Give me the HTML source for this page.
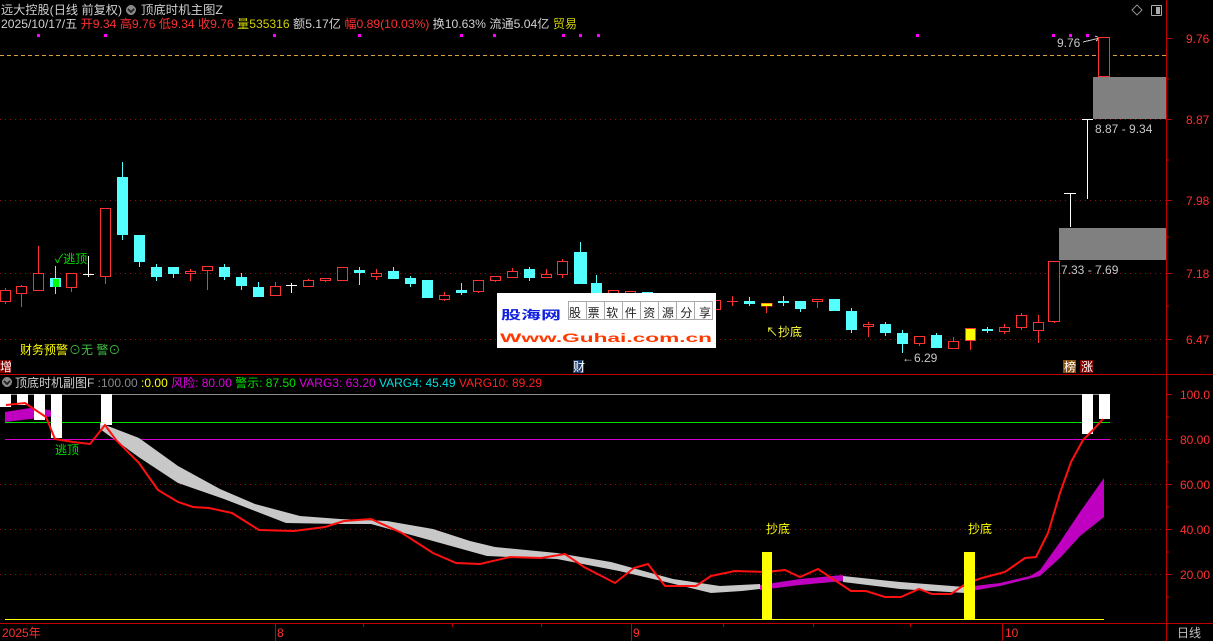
<!DOCTYPE html>
<html><head><meta charset="utf-8">
<style>
html,body{margin:0;padding:0;background:#000;width:1213px;height:641px;overflow:hidden}
svg{display:block}
text{font-family:"Liberation Sans","Noto Sans CJK SC",sans-serif;font-size:12px}
</style></head><body>
<svg width="1213" height="641" viewBox="0 0 1213 641" xmlns="http://www.w3.org/2000/svg" shape-rendering="crispEdges">
<rect width="1213" height="641" fill="#000"/>
<g stroke="#8a1010" stroke-dasharray="1,4" stroke-width="1">
<line x1="0" y1="119.5" x2="1166" y2="119.5"/>
<line x1="0" y1="200.5" x2="1166" y2="200.5"/>
<line x1="0" y1="273.5" x2="1166" y2="273.5"/>
<line x1="0" y1="339.5" x2="1166" y2="339.5"/>
<line x1="0" y1="484.5" x2="1166" y2="484.5"/>
<line x1="0" y1="529.5" x2="1166" y2="529.5"/>
<line x1="0" y1="574.5" x2="1166" y2="574.5"/>
<line x1="1110" y1="439.5" x2="1166" y2="439.5"/>
</g>
<line x1="0" y1="55.5" x2="1166" y2="55.5" stroke="#e0a040" stroke-dasharray="4,3"/>
<g stroke="#c00000" stroke-width="1">
<line x1="1166.5" y1="0" x2="1166.5" y2="641"/>
<line x1="0" y1="374.5" x2="1213" y2="374.5"/>
<line x1="0" y1="623.5" x2="1213" y2="623.5"/>
<line x1="1166" y1="38.5" x2="1172" y2="38.5"/><line x1="1166" y1="119.5" x2="1172" y2="119.5"/>
<line x1="1166" y1="200.5" x2="1172" y2="200.5"/><line x1="1166" y1="273.5" x2="1172" y2="273.5"/>
<line x1="1166" y1="339.5" x2="1172" y2="339.5"/>
<line x1="1166" y1="394.5" x2="1172" y2="394.5"/><line x1="1166" y1="439.5" x2="1172" y2="439.5"/>
<line x1="1166" y1="484.5" x2="1172" y2="484.5"/><line x1="1166" y1="529.5" x2="1172" y2="529.5"/>
<line x1="1166" y1="574.5" x2="1172" y2="574.5"/>
<line x1="1166" y1="417" x2="1169" y2="417"/><line x1="1166" y1="462" x2="1169" y2="462"/>
<line x1="1166" y1="507" x2="1169" y2="507"/><line x1="1166" y1="552" x2="1169" y2="552"/><line x1="1166" y1="597" x2="1169" y2="597"/>
<line x1="1166" y1="79" x2="1169" y2="79"/><line x1="1166" y1="160" x2="1169" y2="160"/><line x1="1166" y1="237" x2="1169" y2="237"/><line x1="1166" y1="306" x2="1169" y2="306"/>
<line x1="275.5" y1="623" x2="275.5" y2="641"/><line x1="631.5" y1="623" x2="631.5" y2="641"/><line x1="1002.5" y1="623" x2="1002.5" y2="641"/>
<line x1="363.5" y1="623" x2="363.5" y2="627"/><line x1="452.5" y1="623" x2="452.5" y2="627"/><line x1="541.5" y1="623" x2="541.5" y2="627"/>
<line x1="723.5" y1="623" x2="723.5" y2="627"/><line x1="813.5" y1="623" x2="813.5" y2="627"/><line x1="910.5" y1="623" x2="910.5" y2="627"/>
</g>
<g fill="#ff3030" font-size="12">
<text x="1186" y="43">9.76</text><text x="1186" y="124">8.87</text><text x="1186" y="205">7.98</text>
<text x="1186" y="278">7.18</text><text x="1186" y="344">6.47</text>
<text x="1180" y="399">100.0</text><text x="1180" y="444">80.00</text><text x="1180" y="489">60.00</text>
<text x="1180" y="534">40.00</text><text x="1180" y="579">20.00</text>
<text x="2" y="637">2025年</text><text x="277" y="637">8</text><text x="633" y="637">9</text><text x="1005" y="637">10</text>
</g>
<text x="1177" y="637" fill="#c0c0c0">日线</text>
<text x="1" y="14" fill="#d0d0d0" textLength="121" lengthAdjust="spacingAndGlyphs">远大控股(日线 前复权)</text>
<circle cx="131" cy="10" r="5" fill="#888"/><path d="M128 9 L131 12 L134 9" stroke="#222" fill="none" stroke-width="1.5"/>
<text x="141" y="14" fill="#d0d0d0" textLength="82" lengthAdjust="spacingAndGlyphs">顶底时机主图Z</text>
<text x="1" y="28" font-size="12" textLength="576" lengthAdjust="spacingAndGlyphs"><tspan fill="#d0d0d0">2025/10/17/五 </tspan><tspan fill="#ff3030">开9.34 高9.76 低9.34 收9.76 </tspan><tspan fill="#d0d000">量535316 </tspan><tspan fill="#d0d0d0">额5.17亿 </tspan><tspan fill="#ff3030">幅0.89(10.03%) </tspan><tspan fill="#d0d0d0">换10.63% 流通5.04亿 </tspan><tspan fill="#d0d000">贸易</tspan></text>
<g fill="#ff00ff">
<rect x="37" y="34" width="3" height="3"/><rect x="104" y="34" width="3" height="3"/><rect x="273" y="34" width="3" height="3"/>
<rect x="358" y="34" width="3" height="3"/><rect x="460" y="34" width="3" height="3"/><rect x="493" y="34" width="3" height="3"/>
<rect x="562" y="34" width="3" height="3"/><rect x="579" y="34" width="3" height="3"/><rect x="597" y="34" width="3" height="3"/>
<rect x="916" y="34" width="3" height="3"/><rect x="1052" y="34" width="3" height="3"/><rect x="1069" y="34" width="3" height="3"/><rect x="1086" y="34" width="3" height="3"/>
</g>
<path d="M1137 5 L1142 10 L1137 15 L1132 10 Z" stroke="#888" fill="none"/>
<rect x="1151.5" y="5.5" width="10" height="10" rx="1" stroke="#aaa" fill="none"/><rect x="1156" y="7" width="4" height="7" fill="#aaa"/>
<rect x="1093" y="77" width="73" height="42" fill="#808080"/>
<rect x="1059" y="228" width="107" height="32" fill="#808080"/>
<text x="1095" y="133" fill="#c8c8c8">8.87 - 9.34</text>
<text x="1061" y="274" fill="#c8c8c8">7.33 - 7.69</text>
<text x="1057" y="47" fill="#c8c8c8">9.76</text>
<path d="M1083 42 L1100 38 M1095 36 L1100 38 L1096 41" stroke="#c8c8c8" fill="none"/>
<g stroke-width="1">
<g stroke="#ff3232" fill="#000">
<line x1="5.5" y1="288" x2="5.5" y2="304"/><rect x="0.5" y="290.5" width="10" height="11"/>
<line x1="21.5" y1="285" x2="21.5" y2="307"/><rect x="16.5" y="286.5" width="10" height="7"/>
<line x1="38.5" y1="246" x2="38.5" y2="290"/><rect x="33.5" y="273.5" width="10" height="17"/>
<line x1="71.5" y1="273" x2="71.5" y2="292"/><rect x="66.5" y="273.5" width="10" height="14"/>
<line x1="105.5" y1="208" x2="105.5" y2="284"/><rect x="100.5" y="208.5" width="10" height="68"/>
<line x1="190.5" y1="269" x2="190.5" y2="281"/><rect x="185.5" y="271.5" width="10" height="2"/>
<line x1="207.5" y1="266" x2="207.5" y2="290"/><rect x="202.5" y="266.5" width="10" height="4"/>
<line x1="275.5" y1="282" x2="275.5" y2="295"/><rect x="270.5" y="286.5" width="10" height="9"/>
<line x1="308.5" y1="279" x2="308.5" y2="286"/><rect x="303.5" y="280.5" width="10" height="6"/>
<line x1="325.5" y1="278" x2="325.5" y2="282"/><rect x="320.5" y="278.5" width="10" height="2"/>
<rect x="337.5" y="267.5" width="10" height="13"/>
<line x1="376.5" y1="269" x2="376.5" y2="280"/><rect x="371.5" y="273.5" width="10" height="3"/>
<line x1="444.5" y1="292" x2="444.5" y2="301"/><rect x="439.5" y="295.5" width="10" height="4"/>
<line x1="478.5" y1="280" x2="478.5" y2="293"/><rect x="473.5" y="280.5" width="10" height="11"/>
<line x1="495.5" y1="276" x2="495.5" y2="282"/><rect x="490.5" y="276.5" width="10" height="4"/>
<line x1="512.5" y1="268" x2="512.5" y2="278"/><rect x="507.5" y="271.5" width="10" height="6"/>
<line x1="546.5" y1="269" x2="546.5" y2="278"/><rect x="541.5" y="274.5" width="10" height="3"/>
<line x1="562.5" y1="259" x2="562.5" y2="278"/><rect x="557.5" y="261.5" width="10" height="13"/>
<rect x="608.5" y="290.5" width="10" height="10"/><rect x="625.5" y="291.5" width="10" height="9"/>
<rect x="676.5" y="293.5" width="10" height="7"/><rect x="693.5" y="296.5" width="10" height="9"/>
<rect x="710.5" y="300.5" width="10" height="9"/>
<line x1="732.5" y1="296" x2="732.5" y2="306"/><line x1="727" y1="301.5" x2="738" y2="301.5"/>
<line x1="817.5" y1="299" x2="817.5" y2="308"/><rect x="812.5" y="299.5" width="10" height="2"/>
<line x1="868.5" y1="322" x2="868.5" y2="337"/><rect x="863.5" y="324.5" width="10" height="2"/>
<line x1="919.5" y1="336" x2="919.5" y2="346"/><rect x="914.5" y="336.5" width="10" height="7"/>
<line x1="953.5" y1="337" x2="953.5" y2="348"/><rect x="948.5" y="341.5" width="10" height="7"/>
<line x1="1004.5" y1="324" x2="1004.5" y2="334"/><rect x="999.5" y="327.5" width="10" height="4"/>
<line x1="1021.5" y1="313" x2="1021.5" y2="330"/><rect x="1016.5" y="315.5" width="10" height="12"/>
<line x1="1038.5" y1="315" x2="1038.5" y2="343"/><rect x="1033.5" y="322.5" width="10" height="8"/>
<line x1="1054.5" y1="261" x2="1054.5" y2="323"/><rect x="1048.5" y="261.5" width="11" height="60"/>
<rect x="1098.5" y="37.5" width="11" height="39"/>
</g>
<g fill="#54ffff" stroke="#54ffff">
<line x1="55.5" y1="266" x2="55.5" y2="294"/><rect x="50.5" y="278.5" width="10" height="8"/>
<line x1="122.5" y1="162" x2="122.5" y2="240"/><rect x="117.5" y="177.5" width="10" height="57"/>
<line x1="139.5" y1="235" x2="139.5" y2="267"/><rect x="134.5" y="235.5" width="10" height="26"/>
<line x1="156.5" y1="264" x2="156.5" y2="281"/><rect x="151.5" y="267.5" width="10" height="9"/>
<line x1="173.5" y1="267" x2="173.5" y2="278"/><rect x="168.5" y="267.5" width="10" height="6"/>
<line x1="224.5" y1="264" x2="224.5" y2="280"/><rect x="219.5" y="267.5" width="10" height="9"/>
<line x1="241.5" y1="273" x2="241.5" y2="290"/><rect x="236.5" y="277.5" width="10" height="8"/>
<line x1="258.5" y1="282" x2="258.5" y2="297"/><rect x="253.5" y="287.5" width="10" height="9"/>
<line x1="359.5" y1="267" x2="359.5" y2="285"/><rect x="354.5" y="270.5" width="10" height="2"/>
<line x1="393.5" y1="267" x2="393.5" y2="278"/><rect x="388.5" y="271.5" width="10" height="7"/>
<line x1="410.5" y1="276" x2="410.5" y2="287"/><rect x="405.5" y="278.5" width="10" height="5"/>
<rect x="422.5" y="280.5" width="10" height="17"/>
<line x1="461.5" y1="283" x2="461.5" y2="295"/><rect x="456.5" y="290.5" width="10" height="2"/>
<line x1="529.5" y1="267" x2="529.5" y2="281"/><rect x="524.5" y="269.5" width="10" height="8"/>
<line x1="580.5" y1="242" x2="580.5" y2="284"/><rect x="574.5" y="252.5" width="12" height="31"/>
<line x1="596.5" y1="275" x2="596.5" y2="292"/><rect x="591.5" y="283.5" width="10" height="9"/>
<rect x="642.5" y="292.5" width="10" height="9"/><rect x="659.5" y="293.5" width="10" height="7"/>
<line x1="749.5" y1="297" x2="749.5" y2="306"/><rect x="744.5" y="301.5" width="10" height="2"/>
<line x1="783.5" y1="296" x2="783.5" y2="306"/><rect x="778.5" y="301.5" width="10" height="1"/>
<line x1="800.5" y1="301" x2="800.5" y2="312"/><rect x="795.5" y="301.5" width="10" height="7"/>
<rect x="829.5" y="299.5" width="10" height="11"/>
<line x1="851.5" y1="308" x2="851.5" y2="333"/><rect x="846.5" y="311.5" width="10" height="18"/>
<line x1="885.5" y1="322" x2="885.5" y2="336"/><rect x="880.5" y="324.5" width="10" height="8"/>
<line x1="902.5" y1="330" x2="902.5" y2="353"/><rect x="897.5" y="333.5" width="10" height="10"/>
<line x1="936.5" y1="333" x2="936.5" y2="347"/><rect x="931.5" y="335.5" width="10" height="12"/>
<line x1="987.5" y1="327" x2="987.5" y2="333"/><rect x="982.5" y="329.5" width="10" height="1"/>
</g>
<rect x="53" y="279" width="6" height="8" fill="#00ff00"/>
<g stroke="#fff">
<line x1="88.5" y1="256" x2="88.5" y2="277"/><line x1="83" y1="274.5" x2="94" y2="274.5"/>
<line x1="291.5" y1="283" x2="291.5" y2="293"/><line x1="286" y1="285.5" x2="297" y2="285.5"/>
<line x1="1070.5" y1="193" x2="1070.5" y2="227"/><line x1="1064" y1="193.5" x2="1076" y2="193.5"/>
<line x1="1087.5" y1="119" x2="1087.5" y2="199"/><line x1="1082" y1="119.5" x2="1093" y2="119.5"/>
</g>
<line x1="766.5" y1="304" x2="766.5" y2="313" stroke="#ff3232"/><rect x="761" y="303" width="11" height="3" fill="#ffff00" stroke="#ff3232" stroke-width="0.5"/>
<rect x="965.5" y="328.5" width="10" height="12" fill="#ffff00" stroke="#ff3232"/><line x1="970.5" y1="341" x2="970.5" y2="350" stroke="#ff3232"/>
</g>
<text x="55" y="263" fill="#00e000">✓逃顶</text>
<text x="766" y="336" fill="#ffff40">↖抄底</text>
<text x="902" y="362" fill="#c8c8c8">←6.29</text>
<text x="20" y="354" fill="#ffff00">财务预警</text><text x="69" y="354" fill="#40c040">⊙无 警⊙</text>
<rect x="0" y="360" width="11" height="13" fill="#800000"/><text x="0" y="371" fill="#fff" font-size="11">增</text>
<rect x="573" y="360" width="11" height="13" fill="#1a3a6a"/><text x="573" y="371" fill="#fff" font-size="11">财</text>
<rect x="1063" y="360" width="13" height="13" fill="#8a5010"/><text x="1064" y="371" fill="#fff" font-size="11">榜</text>
<rect x="1080" y="360" width="13" height="13" fill="#800000"/><text x="1081" y="371" fill="#fff" font-size="11">涨</text>
<rect x="497" y="293" width="219" height="55" fill="#fff"/>
<text x="501" y="319" fill="#1020e0" font-size="24" font-weight="bold" font-family="'Noto Sans CJK SC',sans-serif" textLength="60" lengthAdjust="spacingAndGlyphs">股海网</text>
<g stroke="#aaa" fill="none"><rect x="568.5" y="301.5" width="144" height="18"/>
<line x1="586.5" y1="301" x2="586.5" y2="320"/><line x1="604.5" y1="301" x2="604.5" y2="320"/><line x1="622.5" y1="301" x2="622.5" y2="320"/><line x1="640.5" y1="301" x2="640.5" y2="320"/><line x1="658.5" y1="301" x2="658.5" y2="320"/><line x1="676.5" y1="301" x2="676.5" y2="320"/><line x1="694.5" y1="301" x2="694.5" y2="320"/></g>
<text x="569" y="317" fill="#222" font-size="16" font-family="'Noto Serif CJK SC',serif" textLength="142" lengthAdjust="spacing">股票软件资源分享</text>
<text x="500" y="342" fill="#ff3a00" font-size="21" font-weight="bold" textLength="212" lengthAdjust="spacingAndGlyphs">Www.Guhai.com.cn</text>
<circle cx="7" cy="382" r="5" fill="#888"/><path d="M4 381 L7 384 L10 381" stroke="#222" fill="none" stroke-width="1.5"/>
<text x="15" y="387"><tspan fill="#d0d0d0">顶底时机副图F </tspan><tspan fill="#888">:100.00 </tspan><tspan fill="#ffff00">:0.00 </tspan><tspan fill="#e000e0">风险: 80.00 </tspan><tspan fill="#00e000">警示: 87.50 </tspan><tspan fill="#e000e0">VARG3: 63.20 </tspan><tspan fill="#00e0e0">VARG4: 45.49 </tspan><tspan fill="#ff2020">VARG10: 89.29</tspan></text>
<line x1="0" y1="394.5" x2="1110" y2="394.5" stroke="#909090"/>
<line x1="5" y1="422.5" x2="1110" y2="422.5" stroke="#00e000"/>
<line x1="5" y1="439.5" x2="1110" y2="439.5" stroke="#d000d0"/>
<line x1="5" y1="619.5" x2="1104" y2="619.5" stroke="#ffff00"/>
<g shape-rendering="auto">
<polygon fill="#c8c8c8" points="100,423 139,438 178,466 220,489 255,504 300,516 340,519 387,521 433,529 470,541 495,547 557,553 611,562 673,579 720,586 760,584 760,589 742,591 711,593 670,583 619,571 557,559 487,556 433,541 371,524 340,524 286,523 224,499 178,483 140,458 100,429"/>
<polygon fill="#c8c8c8" points="843,576 900,582 965,587 965,593 900,589 843,582"/>
<polygon fill="#c000c0" points="760,585 800,579 843,575 843,581 800,585 760,590"/>
<polygon fill="#c000c0" points="5,412 30,408 50,410 55,416 30,419 5,422"/>
<polygon fill="#c000c0" points="965,587 1000,583 1030,576 1040,570 1060,542 1080,512 1104,478 1104,517 1080,536 1060,558 1040,576 1000,586 965,592"/>
<g fill="#fff">
<rect x="0" y="394" width="11" height="13"/><rect x="17" y="394" width="11" height="11"/><rect x="34" y="394" width="11" height="26"/>
<rect x="51" y="394" width="11" height="44"/><rect x="101" y="394" width="11" height="31"/>
<rect x="1082" y="394" width="11" height="40"/><rect x="1099" y="394" width="11" height="25"/>
</g>
<polyline fill="none" stroke="#ff1010" stroke-width="2" points="6,405 25,403 46,417 55,439 73,442 90,444 105,425 116,440 139,463 158,490 178,502 193,507 209,508 232,513 259,530 294,531 325,527 344,521 371,519 402,533 433,553 456,563 480,564 510,557 541,558 565,554 584,567 615,583 634,568 648,564 665,586 696,586 711,576 735,571 766,572 785,570 800,577 818,569 851,591 866,591 885,597 901,597 919,589 932,594 951,594 967,583 982,578 1005,572 1025,558 1036,557 1048,533 1060,493 1071,462 1083,440 1093,430 1103,419"/>
</g>
<rect x="762" y="552" width="10" height="67" fill="#ffff00"/>
<rect x="964" y="552" width="11" height="67" fill="#ffff00"/>
<text x="766" y="533" fill="#ffff00">抄底</text>
<text x="968" y="533" fill="#ffff00">抄底</text>
<text x="55" y="454" fill="#00e000">逃顶</text>
</svg>
</body></html>
